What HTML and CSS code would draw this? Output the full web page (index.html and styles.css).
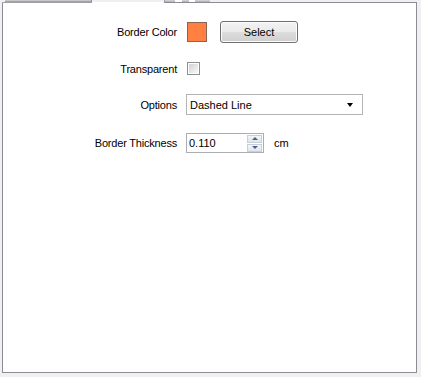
FILE: index.html
```html
<!DOCTYPE html>
<html lang="en">
<head>
<meta charset="UTF-8">
<title>Border</title>
<link rel="stylesheet" href="styles.css">
</head>
<body>
<div class="tabs">
    <div class="tab tab-first"></div>
    <div class="tab tab-active"></div>
    <div class="tab tab-icons"><span class="blob"></span><span class="blob blob-2"></span></div>
    <div class="tab-rest"></div>
</div>
<div class="panel">
    <div class="row row-color">
        <div class="label">Border Color</div>
        <div class="field">
            <div class="swatch"></div>
            <button class="btn">Select</button>
        </div>
    </div>
    <div class="row row-check">
        <div class="label">Transparent</div>
        <div class="field">
            <div class="check"><div class="check-in"></div></div>
        </div>
    </div>
    <div class="row row-combo">
        <div class="label">Options</div>
        <div class="field">
            <div class="combo">
                <span>Dashed Line</span>
                <span class="arrow"></span>
            </div>
        </div>
    </div>
    <div class="row row-num">
        <div class="label">Border Thickness</div>
        <div class="field">
            <div class="numeric">
                <span class="num-text">0.110</span>
                <div class="spin">
                    <div class="spin-btn"><span class="tri-up"></span></div>
                    <div class="spin-btn"><span class="tri-down"></span></div>
                </div>
            </div>
            <span class="unit">cm</span>
        </div>
    </div>
</div>
</body>
</html>
```

FILE: styles.css
```css
body {
    margin: 0;
    background-color: #f0f0f0;
    font-family: "Liberation Sans", Arial, sans-serif;
    font-size: 11px;
    color: #000;
}
.tabs {
    display: flex;
    height: 2px;
    padding-left: 5px;
}
.tab-first {
    width: 86px;
    height: 1px;
    background-color: #c8c8c8;
    border-right: 1px solid #8a8a92;
    border-bottom: 1px solid #a0a0a8;
}
.tab-active {
    width: 72px;
    height: 2px;
}
.tab-icons {
    position: relative;
    width: 45px;
    height: 1px;
    background-color: #cfcfcf;
    border-left: 1px solid #a0a0a8;
    border-bottom: 1px solid #b8b8b8;
}
.blob {
    position: absolute;
    left: 10px;
    top: 0;
    width: 7px;
    height: 2px;
    background-color: #fff;
}
.blob-2 {
    left: 24px;
    width: 6px;
}
.panel {
    margin-left: 2px;
    width: 413px;
    height: 369px;
    background-color: #fff;
    border: 1px solid #8b8c96;
    border-top-color: transparent;
    position: relative;
}
.panel::before {
    content: "";
    position: absolute;
    top: -1px;
    left: 161px;
    right: -1px;
    height: 1px;
    background-color: #8b8c96;
}
.panel::after {
    content: "";
    position: absolute;
    top: -1px;
    left: -1px;
    width: 90px;
    height: 1px;
    background-color: #a0a0a8;
}
.row {
    display: flex;
    align-items: center;
}
.row-color {
    margin-top: 18px;
    height: 22px;
}
.row-check {
    margin-top: 19px;
    height: 13px;
}
.row-combo {
    margin-top: 19px;
    height: 21px;
}
.row-num {
    margin-top: 18px;
    height: 20px;
}
.label {
    width: 174px;
    text-align: right;
    margin-right: 9px;
    letter-spacing: -0.2px;
}
.field {
    display: flex;
    align-items: center;
}
.swatch {
    width: 18px;
    height: 18px;
    margin-left: 1px;
    background-color: #ff8040;
    border: 1px solid #8a6450;
}
.btn {
    margin-left: 13px;
    width: 78px;
    height: 22px;
    padding: 0;
    font-family: inherit;
    font-size: 11px;
    color: #000;
    border: 1px solid #707070;
    border-radius: 3px;
    background: linear-gradient(#f2f2f2 0%, #ebebeb 50%, #dddddd 51%, #cfcfcf 100%);
    box-shadow: inset 0 0 0 1px #fcfcfc;
}
.check {
    margin-left: 1px;
    width: 11px;
    height: 11px;
    border: 1px solid #8e8f8f;
    background-color: #fff;
    display: flex;
    align-items: center;
    justify-content: center;
}
.check-in {
    width: 9px;
    height: 9px;
    background: linear-gradient(135deg, #cfd2d6, #f8f8f8);
}
.combo {
    height: 19px;
    border: 1px solid #b4b4b4;
    display: flex;
    align-items: center;
    justify-content: space-between;
    padding: 0 9px 0 3px;
    width: 163px;
}
.arrow {
    width: 0;
    height: 0;
    border-left: 3.5px solid transparent;
    border-right: 3.5px solid transparent;
    border-top: 4px solid #000;
}
.numeric {
    width: 76px;
    height: 18px;
    border: 1px solid #abadb3;
    display: flex;
    align-items: center;
    justify-content: space-between;
}
.num-text {
    padding-left: 2px;
}
.spin {
    display: flex;
    flex-direction: column;
    gap: 1px;
    margin-right: 1px;
}
.spin-btn {
    width: 13px;
    height: 6px;
    border: 1px solid #c7cfd8;
    background: linear-gradient(#f4f6f9, #dfe5ec);
    display: flex;
    align-items: center;
    justify-content: center;
}
.tri-up {
    width: 0;
    height: 0;
    border-left: 3px solid transparent;
    border-right: 3px solid transparent;
    border-bottom: 3px solid #4d6185;
}
.tri-down {
    width: 0;
    height: 0;
    border-left: 3px solid transparent;
    border-right: 3px solid transparent;
    border-top: 3px solid #4d6185;
}
.unit {
    margin-left: 10px;
}
```
